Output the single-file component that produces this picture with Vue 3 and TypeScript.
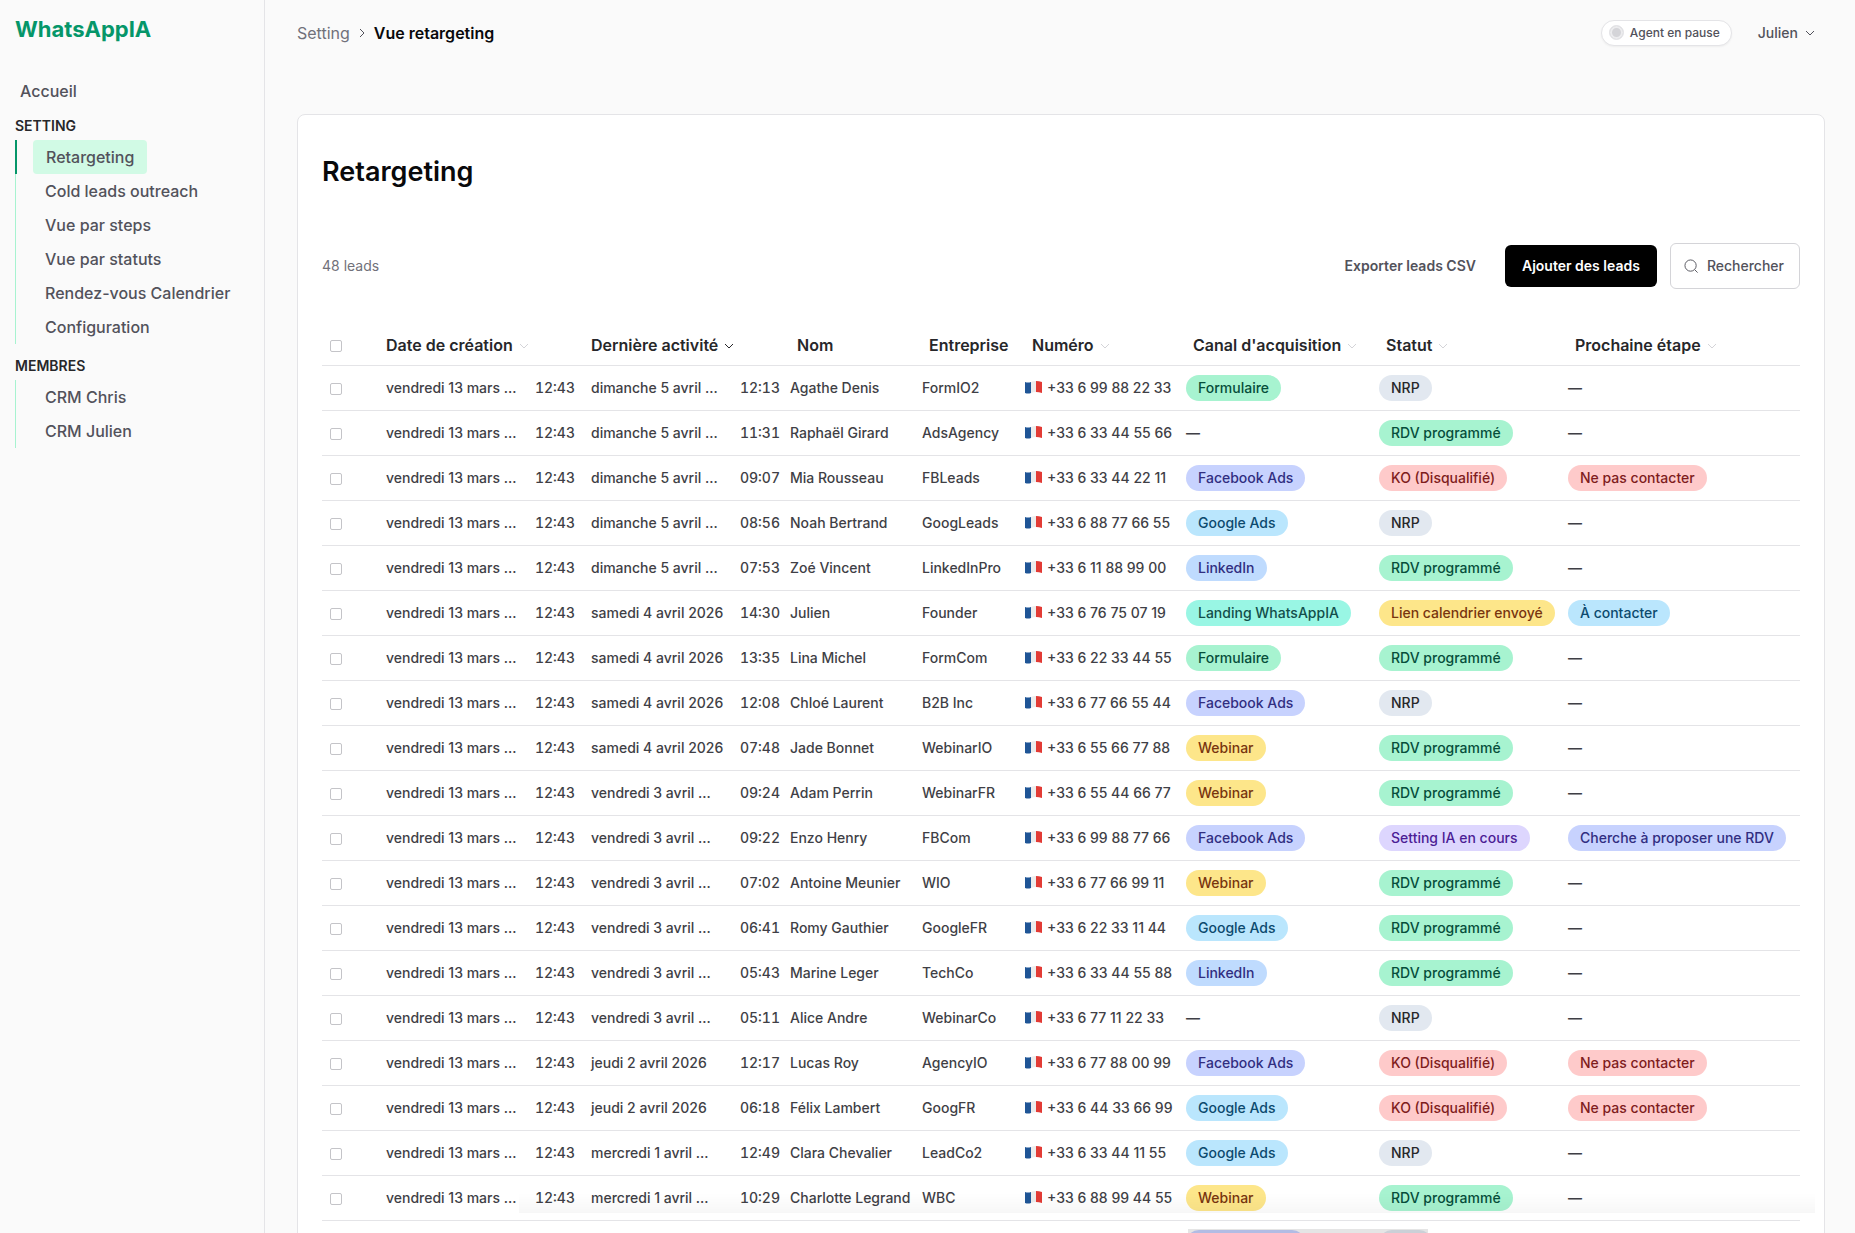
<script setup lang="ts">
import { ref } from 'vue'

interface Lead {
  activity: string
  time: string
  name: string
  company: string
  phone: string
  channel: string
  status: string
  next: string
}

const lead = (
  activity: string,
  time: string,
  name: string,
  company: string,
  phone: string,
  channel: string,
  status: string,
  next = '',
): Lead => ({ activity, time, name, company, phone, channel, status, next })

const leads: Lead[] = [
  lead('dimanche 5 avril …', '12:13', 'Agathe Denis', 'FormIO2', '+33 6 99 88 22 33', 'Formulaire', 'NRP'),
  lead('dimanche 5 avril …', '11:31', 'Raphaël Girard', 'AdsAgency', '+33 6 33 44 55 66', '', 'RDV programmé'),
  lead('dimanche 5 avril …', '09:07', 'Mia Rousseau', 'FBLeads', '+33 6 33 44 22 11', 'Facebook Ads', 'KO (Disqualifié)', 'Ne pas contacter'),
  lead('dimanche 5 avril …', '08:56', 'Noah Bertrand', 'GoogLeads', '+33 6 88 77 66 55', 'Google Ads', 'NRP'),
  lead('dimanche 5 avril …', '07:53', 'Zoé Vincent', 'LinkedInPro', '+33 6 11 88 99 00', 'LinkedIn', 'RDV programmé'),
  lead('samedi 4 avril 2026', '14:30', 'Julien', 'Founder', '+33 6 76 75 07 19', 'Landing WhatsAppIA', 'Lien calendrier envoyé', 'À contacter'),
  lead('samedi 4 avril 2026', '13:35', 'Lina Michel', 'FormCom', '+33 6 22 33 44 55', 'Formulaire', 'RDV programmé'),
  lead('samedi 4 avril 2026', '12:08', 'Chloé Laurent', 'B2B Inc', '+33 6 77 66 55 44', 'Facebook Ads', 'NRP'),
  lead('samedi 4 avril 2026', '07:48', 'Jade Bonnet', 'WebinarIO', '+33 6 55 66 77 88', 'Webinar', 'RDV programmé'),
  lead('vendredi 3 avril …', '09:24', 'Adam Perrin', 'WebinarFR', '+33 6 55 44 66 77', 'Webinar', 'RDV programmé'),
  lead('vendredi 3 avril …', '09:22', 'Enzo Henry', 'FBCom', '+33 6 99 88 77 66', 'Facebook Ads', 'Setting IA en cours', 'Cherche à proposer une RDV'),
  lead('vendredi 3 avril …', '07:02', 'Antoine Meunier', 'WIO', '+33 6 77 66 99 11', 'Webinar', 'RDV programmé'),
  lead('vendredi 3 avril …', '06:41', 'Romy Gauthier', 'GoogleFR', '+33 6 22 33 11 44', 'Google Ads', 'RDV programmé'),
  lead('vendredi 3 avril …', '05:43', 'Marine Leger', 'TechCo', '+33 6 33 44 55 88', 'LinkedIn', 'RDV programmé'),
  lead('vendredi 3 avril …', '05:11', 'Alice Andre', 'WebinarCo', '+33 6 77 11 22 33', '', 'NRP'),
  lead('jeudi 2 avril 2026', '12:17', 'Lucas Roy', 'AgencyIO', '+33 6 77 88 00 99', 'Facebook Ads', 'KO (Disqualifié)', 'Ne pas contacter'),
  lead('jeudi 2 avril 2026', '06:18', 'Félix Lambert', 'GoogFR', '+33 6 44 33 66 99', 'Google Ads', 'KO (Disqualifié)', 'Ne pas contacter'),
  lead('mercredi 1 avril …', '12:49', 'Clara Chevalier', 'LeadCo2', '+33 6 33 44 11 55', 'Google Ads', 'NRP'),
  lead('mercredi 1 avril …', '10:29', 'Charlotte Legrand', 'WBC', '+33 6 88 99 44 55', 'Webinar', 'RDV programmé'),
]

const tones: Record<string, string> = {
  Formulaire: 'green',
  'RDV programmé': 'green',
  'Facebook Ads': 'indigo',
  'Cherche à proposer une RDV': 'indigo',
  'Google Ads': 'sky',
  'À contacter': 'sky',
  LinkedIn: 'blue',
  'Landing WhatsAppIA': 'teal',
  Webinar: 'amber',
  'Lien calendrier envoyé': 'amber',
  'KO (Disqualifié)': 'red',
  'Ne pas contacter': 'red',
  'Setting IA en cours': 'violet',
  NRP: 'slate',
}

const columns = [
  { label: 'Date de création', sort: true },
  { label: 'Dernière activité', sort: true, active: true },
  { label: 'Nom' },
  { label: 'Entreprise' },
  { label: 'Numéro', sort: true },
  { label: "Canal d'acquisition", sort: true },
  { label: 'Statut', sort: true },
  { label: 'Prochaine étape', sort: true },
]

const settingLinks = ['Retargeting', 'Cold leads outreach', 'Vue par steps', 'Vue par statuts', 'Rendez-vous Calendrier', 'Configuration']
const memberLinks = ['CRM Chris', 'CRM Julien']
const current = ref('Retargeting')
const selected = ref<string[]>([])

function toggleAll(event: Event) {
  selected.value = (event.target as HTMLInputElement).checked ? leads.map((l) => l.name) : []
}
</script>

<template>
  <div class="app">
    <aside class="sidebar">
      <a class="logo" href="#">WhatsAppIA</a>
      <nav>
        <a class="home" href="#">Accueil</a>
        <h2>SETTING</h2>
        <ul>
          <li v-for="item in settingLinks" :key="item" :class="{ active: item === current }">
            <a href="#" @click.prevent="current = item">{{ item }}</a>
          </li>
        </ul>
        <h2>MEMBRES</h2>
        <ul>
          <li v-for="item in memberLinks" :key="item" :class="{ active: item === current }">
            <a href="#" @click.prevent="current = item">{{ item }}</a>
          </li>
        </ul>
      </nav>
    </aside>

    <main>
      <header class="topbar">
        <div class="crumbs">
          <a href="#">Setting</a>
          <svg width="8" height="12" viewBox="0 0 8 12"><path d="M2 2l4 4-4 4" /></svg>
          <strong>Vue retargeting</strong>
        </div>
        <div class="account">
          <button class="agent" type="button"><span class="dot"></span>Agent en pause</button>
          <button class="user" type="button">
            Julien
            <svg width="12" height="12" viewBox="0 0 12 12"><path d="M2 4l4 4 4-4" /></svg>
          </button>
        </div>
      </header>

      <section class="card">
        <h1>Retargeting</h1>
        <div class="toolbar">
          <span class="count">48 leads</span>
          <button class="export" type="button">Exporter leads CSV</button>
          <button class="add" type="button">Ajouter des leads</button>
          <button class="search" type="button">
            <svg width="15" height="15" viewBox="0 0 16 16"><circle cx="7" cy="7" r="6" /><path d="M11.5 11.5L14.5 14.5" /></svg>
            Rechercher
          </button>
        </div>

        <table>
          <colgroup>
            <col class="c-check" /><col class="c-date" /><col class="c-activity" /><col class="c-name" /><col class="c-company" />
            <col class="c-phone" /><col class="c-channel" /><col class="c-status" /><col />
          </colgroup>
          <thead>
            <tr>
              <th><input type="checkbox" aria-label="Tout sélectionner" @change="toggleAll" /></th>
              <th v-for="column in columns" :key="column.label" :class="{ sorted: column.active }">
                {{ column.label }}<svg v-if="column.sort" width="10" height="10" viewBox="0 0 10 10"><path d="M1 3l4 4 4-4" /></svg>
              </th>
            </tr>
          </thead>
          <tbody>
            <tr v-for="l in leads" :key="l.name">
              <td><input v-model="selected" type="checkbox" :value="l.name" :aria-label="l.name" /></td>
              <td><div class="when"><span>vendredi 13 mars …</span><time>12:43</time></div></td>
              <td><div class="when"><span>{{ l.activity }}</span><time>{{ l.time }}</time></div></td>
              <td>{{ l.name }}</td>
              <td>{{ l.company }}</td>
              <td>
                <div class="phone">
                  <svg width="17" height="13" viewBox="0 0 17 13">
                    <path d="M0 1Q3 2 6 1V12Q3 13 0 12Z" fill="#1f5596" />
                    <path d="M6 1Q8 0 11 0V11Q8 11 6 12Z" fill="#ececec" />
                    <path d="M11 0Q14 0 17 1V12Q14 11 11 11Z" fill="#e23b35" />
                  </svg>
                  {{ l.phone }}
                </div>
              </td>
              <td><span v-if="l.channel" class="badge" :class="tones[l.channel]">{{ l.channel }}</span><span v-else class="none">—</span></td>
              <td><span class="badge" :class="tones[l.status]">{{ l.status }}</span></td>
              <td><span v-if="l.next" class="badge" :class="tones[l.next]">{{ l.next }}</span><span v-else class="none">—</span></td>
            </tr>
            <tr class="pending" aria-hidden="true">
              <td colspan="6"></td>
              <td><span class="badge indigo wide"></span></td>
              <td><span class="badge slate short"></span></td>
              <td></td>
            </tr>
          </tbody>
        </table>
      </section>
      <div class="bottom-shade"></div>
      <div class="bottom-strip"></div>
    </main>
  </div>
</template>

<style>
body {
  background: #fafafa;
}
</style>

<style scoped>
.app {
  display: flex;
  height: 100vh;
  overflow: hidden;
  font-family: Inter, 'Liberation Sans', sans-serif;
  font-size: 14px;
  font-weight: 500;
  line-height: 20px;
  color: #3f3f46;
}
*,
*::before {
  box-sizing: border-box;
}
a {
  color: inherit;
  text-decoration: none;
}
button {
  font: inherit;
  color: inherit;
  background: none;
  border: 0;
  padding: 0;
  cursor: pointer;
}
svg {
  fill: none;
  stroke: currentColor;
  flex: none;
}
h1,
h2,
ul {
  margin: 0;
  padding: 0;
  list-style: none;
}
.sidebar {
  flex: none;
  width: 265px;
  padding: 13px 15px;
  border-right: 1px solid #e4e4e7;
  color: #52525b;
}
.logo {
  display: block;
  font-size: 22px;
  line-height: 32px;
  font-weight: 700;
  color: #059669;
}
nav {
  margin-top: 29px;
  font-size: 16px;
}
.home {
  display: block;
  padding: 5px;
  line-height: 24px;
}
h2 {
  padding: 8px 0 4px;
  font-size: 14px;
  line-height: 20px;
  font-weight: 600;
  color: #27272a;
}
ul + h2 {
  padding-top: 12px;
}
li {
  display: flex;
  height: 34px;
  padding-left: 16px;
  border-left: 1px solid #a7f3d0;
}
li a {
  padding: 0 13px;
  border-radius: 4px;
  line-height: 34px;
}
li.active {
  border-left: 2px solid #059669;
}
li.active a {
  background: #d1fae5;
}
main {
  flex: 1;
  min-width: 0;
  padding: 0 30px 0 32px;
}
.topbar {
  display: flex;
  align-items: center;
  justify-content: space-between;
  height: 65px;
}
.crumbs {
  display: flex;
  align-items: center;
  gap: 8px;
  font-size: 16px;
}
.crumbs a {
  font-weight: 400;
  color: #71717a;
}
.crumbs svg {
  color: #52525b;
}
.crumbs strong {
  font-weight: 600;
  color: #09090b;
}
.account {
  display: flex;
  align-items: center;
  gap: 26px;
  padding-right: 9px;
  color: #52525b;
}
.agent {
  display: flex;
  align-items: center;
  gap: 6px;
  height: 26px;
  padding: 0 11px 0 7px;
  border: 1px solid #e4e4e7;
  border-radius: 13px;
  background: #fff;
  box-shadow: 0 1px 2px #0000000d;
  font-size: 12px;
}
.dot {
  width: 15px;
  height: 15px;
  border: 1px solid #e4e4e7;
  border-radius: 50%;
  background: #d4d4d8;
  box-shadow: inset 0 0 0 2px #ececee;
}
.user {
  display: flex;
  align-items: center;
  gap: 6px;
}
.card {
  margin-top: 49px;
  padding: 35px 24px 0;
  border: 1px solid #e4e4e7;
  border-radius: 8px;
  background: #fff;
}
h1 {
  font-size: 27px;
  line-height: 44px;
  font-weight: 600;
  color: #09090b;
}
.toolbar {
  display: flex;
  align-items: center;
  margin-top: 49px;
}
.count {
  margin-right: auto;
  font-weight: 400;
  color: #71717a;
}
.export {
  margin-right: 29px;
  font-weight: 600;
  color: #52525b;
}
.add {
  height: 42px;
  margin-right: 13px;
  padding: 0 17px;
  border-radius: 6px;
  background: #000;
  color: #fff;
  font-weight: 600;
}
.search {
  display: flex;
  align-items: center;
  gap: 8px;
  height: 46px;
  padding: 0 15px 0 13px;
  border: 1px solid #d4d4d8;
  border-radius: 6px;
  color: #52525b;
}
table {
  width: 100%;
  margin-top: 36px;
  table-layout: fixed;
  border-collapse: collapse;
}
.c-check { width: 64px; }
.c-date { width: 205px; }
.c-activity { width: 199px; }
.c-name { width: 132px; }
.c-company { width: 103px; }
.c-phone { width: 161px; }
.c-channel { width: 193px; }
.c-status { width: 189px; }
th,
td {
  height: 45px;
  padding: 0;
  border-bottom: 1px solid #e4e4e7;
  text-align: left;
  white-space: nowrap;
}
th {
  height: 40px;
  font-size: 16px;
  font-weight: 600;
  color: #27272a;
}
th:nth-child(n + 4) {
  padding-left: 7px;
}
th svg {
  margin-left: 6px;
  color: #d4d4d8;
}
th.sorted svg {
  color: #27272a;
}
input {
  display: block;
  appearance: none;
  width: 12px;
  height: 12px;
  margin: 2px 0 0 8px;
  border: 1px solid #c4c4c8;
  border-radius: 2px;
  background: #fff;
}
input:checked {
  background: #059669;
}
.when {
  display: flex;
  justify-content: space-between;
  width: 189px;
}
time {
  font-variant-numeric: tabular-nums;
}
.phone {
  display: flex;
  align-items: center;
  gap: 5px;
}
.phone svg {
  stroke: none;
}
.none {
  font-weight: 600;
}
.badge {
  display: inline-block;
  padding: 3px 12px;
  border-radius: 13px;
}
.pending .badge {
  display: block;
  height: 26px;
}
.wide { width: 119px; }
.short { width: 53px; }
.green { background: #a7f3d0; color: #064e3b; }
.indigo { background: #c7d2fe; color: #312e81; }
.sky { background: #bae6fd; color: #0c4a6e; }
.blue { background: #bfdbfe; color: #312e81; }
.teal { background: #99f6e4; color: #134e4a; }
.amber { background: #fde68a; color: #78350f; }
.red { background: #fecaca; color: #7f1d1d; }
.violet { background: #ddd6fe; color: #4c1d95; }
.slate { background: #e2e8f0; color: #27272a; }
.bottom-shade {
  position: fixed;
  right: 40px;
  bottom: 20px;
  left: 28%;
  height: 20px;
  background: linear-gradient(#0000, #00000008);
  pointer-events: none;
}
.bottom-strip {
  position: fixed;
  bottom: 0;
  left: 1188px;
  width: 240px;
  height: 4px;
  background: #0000001a;
  pointer-events: none;
}
</style>
